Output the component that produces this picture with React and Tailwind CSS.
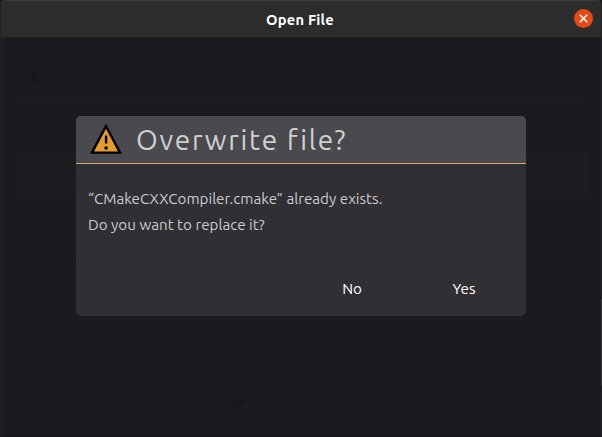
import React from "react";

const crumbs = [
  { label: "/", cell: "w-[30px]" },
  { label: "home", cell: "w-[59px]" },
  { label: "andre", cell: "w-[59px]" },
  { label: "code", cell: "w-[53px]" },
  { label: "tmp", cell: "w-[49px]" },
  { label: "origin", cell: "w-[60px]" },
  { label: "build", cell: "w-[54px]" },
  { label: "CMakeFiles", cell: "w-[92px]" },
  { label: "3.30.3", cell: "w-[40px]" },
];

const files = [
  { id: 1, name: "C", size: "4", date: "2024 19:20", folder: true },
  { id: 2, name: "C", size: "6", date: "2024 19:20", selected: true },
  { id: 3, name: "C", size: "5", date: "2024 19:20" },
  { id: 4, name: "C", size: "2", date: "2024 19:20" },
];

function FileIcon({ folder }) {
  return (
    <svg width="14" height="14" viewBox="0 0 14 14" fill="none" stroke="#19191d">
      {folder ? (
        <path d="M.5 3.5v-1h4l1 1h8v8H.5z" />
      ) : (
        <path d="M2.5.5h6l3 3v10h-9zM8.5.5v3h3" />
      )}
    </svg>
  );
}

function TitleBar() {
  return (
    <header className="flex h-[38px] items-center rounded-t-[5px] border-x border-b border-t border-[#222225] border-t-[#3c3c3c] bg-[#2c2c2c] pr-[8px]">
      <div className="w-[25px]" />
      <h1 className="flex-1 pt-[2px] text-center text-[14.67px] leading-[20px] font-bold tracking-[0.2px] text-white">
        Open File
      </h1>
      <button aria-label="Close" className="mb-px flex h-[19px] w-[19px] items-center justify-center rounded-full bg-[#e24a18]">
        <svg width="9" height="9" viewBox="0 0 9 9" stroke="#fff" strokeWidth="1.5">
          <path d="M.8.8l7.4 7.4M8.2.8L.8 8.2" />
        </svg>
      </button>
    </header>
  );
}

function FileBrowser() {
  return (
    <main className="flex h-[399px] flex-col border-x border-b border-x-[#202022] border-b-[#161519] bg-[#1b1a1f] px-[12px] text-[14px] text-[#19181d]">
      <nav className="flex h-[62px] items-end border-b border-[#1d1c21] pb-[13px] leading-[20px]">
        <div className="w-[55px] pb-[3px] pl-[15px]">
          <svg width="12" height="13" viewBox="0 0 12 13" fill="#18171c">
            <path d="M6 0l6 6H9v7H3V6H0z" />
          </svg>
        </div>
        {crumbs.map((c) => (
          <span key={c.label} className={c.cell}>{c.label}</span>
        ))}
      </nav>
      <ul className="flex h-[190px] flex-col px-[2px] pt-[6px]">
        {files.map((f) => (
          <li key={f.id} className={`flex h-[46px] shrink-0 items-center pl-[13px] pr-[12px] ${f.selected ? "bg-[#1d1c20]" : ""}`}>
            <FileIcon folder={f.folder} />
            <div className="ml-[26px] flex-1 pt-[2px] leading-[18px]">
              <div>{f.name}</div>
              <div className={`flex justify-between text-[13px] ${f.selected ? "text-[#1a191d]" : "text-[#1a1a1f]"}`}>
                <span>{f.size}</span>
                <span>{f.date}</span>
              </div>
            </div>
          </li>
        ))}
      </ul>
      <div className="mt-[61px] flex h-[20px] items-center">
        <span className="w-[70px]">File name</span>
        <span>CMakeCXXCompiler.cmake</span>
      </div>
      <div className="mt-[24px] flex h-[20px] items-center">
        <span className="w-[75px]">Filter</span>
        <span className="w-[141px]">All Files (*)</span>
        <svg width="16" height="10" viewBox="0 0 16 10" fill="#17161b">
          <path d="M0 0h16L8 10z" />
        </svg>
        <span className="ml-[162px] w-[118px]">Cancel</span>
        <span>Save</span>
      </div>
    </main>
  );
}

function WarningIcon() {
  return (
    <svg width="32" height="30" viewBox="0 0 32 30">
      <path d="M16 2.2L30 28.6H2z" fill="#e69c30" stroke="#000" strokeWidth="2.4" />
      <path d="M14.9 11.5h2.4v8h-2.4z" />
      <circle cx="16.1" cy="24" r="1.8" />
    </svg>
  );
}

function OverwriteDialog() {
  return (
    <section role="dialog" className="flex h-[200px] w-[450px] flex-col overflow-hidden rounded-[5px] bg-[#302f33]">
      <div className="flex h-[48px] items-center border-b border-[#d5a269] bg-[#4a494d] pb-px pl-[14px]">
        <WarningIcon />
        <h2 className="ml-[14px] pt-[2px] text-[28px] leading-[40px] tracking-[1.7px] whitespace-nowrap text-[#d0d0d1]">
          Overwrite file?
        </h2>
      </div>
      <div className="flex flex-1 flex-col pl-[12px] pt-[22px] text-[15.2px] leading-[26px] whitespace-nowrap text-[#cbcbcc]">
        <p>“CMakeCXXCompiler.cmake” already exists.</p>
        <p>Do you want to replace it?</p>
      </div>
      <div className="flex h-[56px] justify-end pr-[6px] text-[15.2px] leading-[57px] text-white">
        <button className="w-[112px] text-center">No</button>
        <button className="w-[112px] text-center">Yes</button>
      </div>
    </section>
  );
}

export default function App() {
  return (
    <div className="relative h-[437px] w-[602px] overflow-hidden bg-[#1b1a1f] font-['Ubuntu','Noto_Sans',sans-serif]">
      <TitleBar />
      <FileBrowser />
      <div className="absolute inset-x-0 top-[116px] flex justify-center">
        <OverwriteDialog />
      </div>
      <div className="absolute top-[299px] right-0 h-[87px] w-px bg-[#39393c]" />
    </div>
  );
}
